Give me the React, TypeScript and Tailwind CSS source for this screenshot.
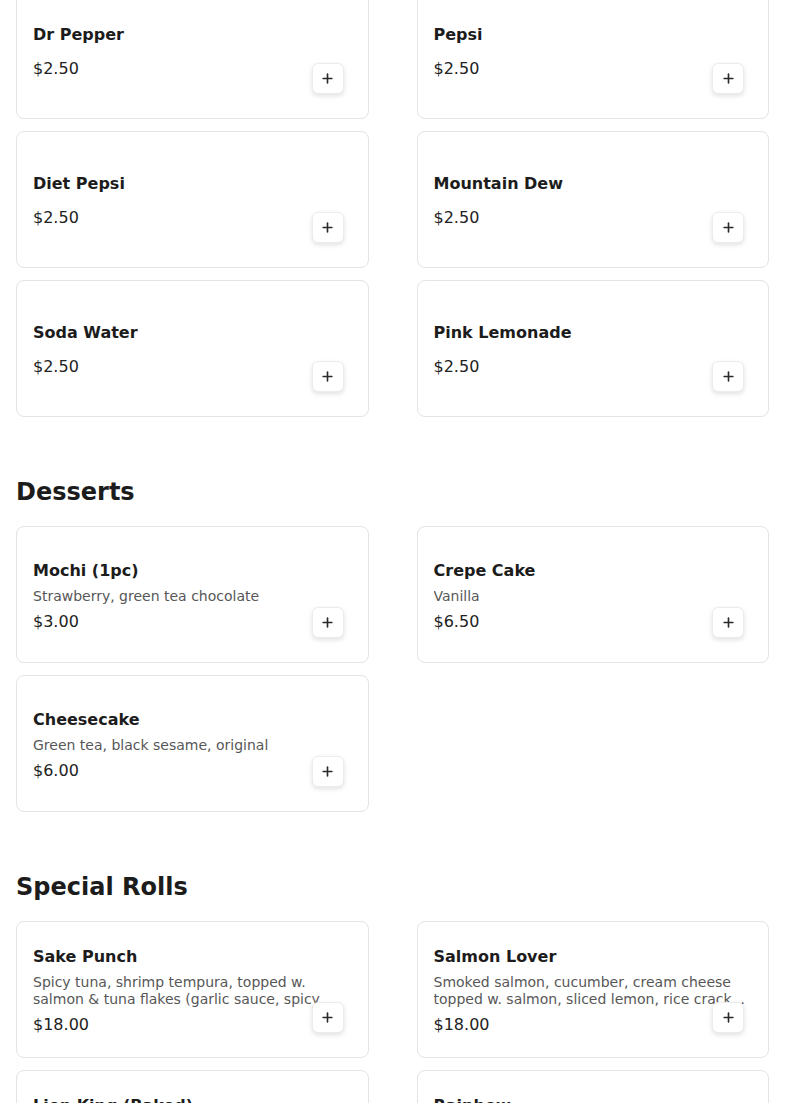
import React from 'react';
import { Plus } from 'lucide-react';

interface MenuItem {
  name: string;
  price: string;
  description?: string;
}

interface MenuSection {
  title?: string;
  items: MenuItem[];
}

const sections: MenuSection[] = [
  {
    // drinks heading is scrolled out of view
    items: [
      { name: 'Dr Pepper', price: '$2.50' },
      { name: 'Pepsi', price: '$2.50' },
      { name: 'Diet Pepsi', price: '$2.50' },
      { name: 'Mountain Dew', price: '$2.50' },
      { name: 'Soda Water', price: '$2.50' },
      { name: 'Pink Lemonade', price: '$2.50' },
    ],
  },
  {
    title: 'Desserts',
    items: [
      { name: 'Mochi (1pc)', description: 'Strawberry, green tea chocolate', price: '$3.00' },
      { name: 'Crepe Cake', description: 'Vanilla', price: '$6.50' },
      { name: 'Cheesecake', description: 'Green tea, black sesame, original', price: '$6.00' },
    ],
  },
  {
    title: 'Special Rolls',
    items: [
      {
        name: 'Sake Punch',
        description:
          'Spicy tuna, shrimp tempura, topped w. salmon & tuna flakes (garlic sauce, spicy mayo, eel sauce)',
        price: '$18.00',
      },
      {
        name: 'Salmon Lover',
        description:
          'Smoked salmon, cucumber, cream cheese topped w. salmon, sliced lemon, rice cracker, eel sauce',
        price: '$18.00',
      },
      {
        name: 'Lion King (Baked)',
        description:
          'California roll topped w. baked salmon, spicy mayo, eel sauce, masago and green onion',
        price: '$17.00',
      },
      {
        name: 'Rainbow',
        description:
          'California roll topped w. tuna, salmon, yellowtail, white fish, shrimp and avocado',
        price: '$17.00',
      },
    ],
  },
];

const ItemCard: React.FC<{ item: MenuItem }> = ({ item }) => (
  <div className="relative h-[137px] rounded-lg border border-[#e4e4e4] bg-white px-4 pt-[3px] flex flex-col justify-center">
    <h3 className="text-base leading-6 font-bold text-[#1c1c1c]">{item.name}</h3>
    {item.description && (
      <p className="mt-[5px] text-sm leading-[17px] text-[#575757] line-clamp-2">{item.description}</p>
    )}
    <p className={item.description ? 'mt-[5px] text-base leading-6 text-[#222]' : 'mt-[10px] text-base leading-6 text-[#222]'}>
      {item.price}
    </p>
    <button className="absolute right-6 bottom-6 w-8 h-[31px] rounded-md bg-white border border-[#ececec] shadow-[0_2px_5px_rgba(0,0,0,0.12)] flex items-center justify-center text-[#2a2a2a]">
      <Plus size={15} strokeWidth={2.6} />
    </button>
  </div>
);

export default function App() {
  return (
    <div className="min-h-screen bg-white font-['DejaVu_Sans',sans-serif] overflow-hidden">
      <div className="px-4 -mt-[18px] flex flex-col gap-[59px]">
        {sections.map((section, i) => (
          <section key={i}>
            {section.title && (
              <h2 className="mb-[18px] text-2xl leading-8 font-bold text-[#1c1c1c]">{section.title}</h2>
            )}
            <div className="grid grid-cols-2 gap-x-12 gap-y-3">
              {section.items.map((item) => (
                <ItemCard key={item.name} item={item} />
              ))}
            </div>
          </section>
        ))}
      </div>
    </div>
  );
}
